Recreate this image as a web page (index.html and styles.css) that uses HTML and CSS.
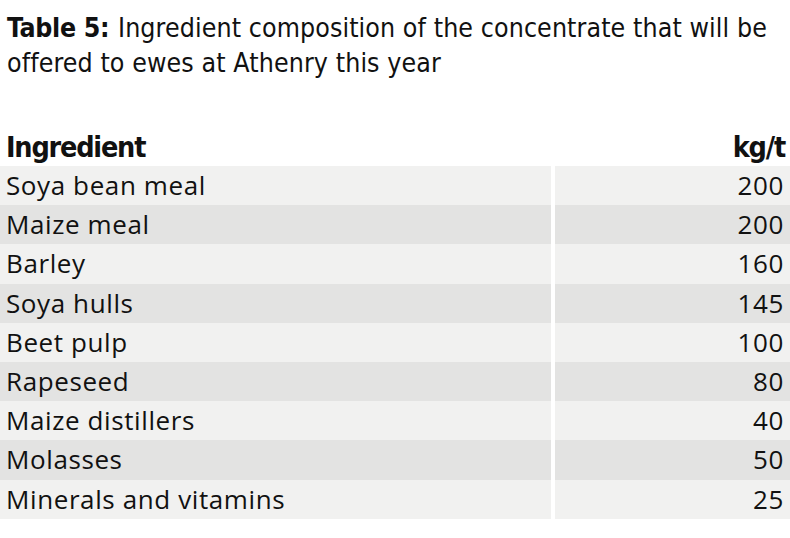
FILE: index.html
```html
<!DOCTYPE html>
<html>
<head>
<meta charset="utf-8">
<link rel="stylesheet" href="styles.css">
</head>
<body>
<div class="page">
  <h1 class="title"><span class="label">Table 5:</span> Ingredient composition of the concentrate that will be offered to ewes at Athenry this year</h1>
  <div class="table">
    <div class="head">
      <span>Ingredient</span>
      <span>kg/t</span>
    </div>
    <div class="row"><div class="c1">Soya bean meal</div><div class="c2">200</div></div>
    <div class="row"><div class="c1">Maize meal</div><div class="c2">200</div></div>
    <div class="row"><div class="c1">Barley</div><div class="c2">160</div></div>
    <div class="row"><div class="c1">Soya hulls</div><div class="c2">145</div></div>
    <div class="row"><div class="c1">Beet pulp</div><div class="c2">100</div></div>
    <div class="row"><div class="c1">Rapeseed</div><div class="c2">80</div></div>
    <div class="row"><div class="c1">Maize distillers</div><div class="c2">40</div></div>
    <div class="row"><div class="c1">Molasses</div><div class="c2">50</div></div>
    <div class="row"><div class="c1">Minerals and vitamins</div><div class="c2">25</div></div>
  </div>
</div>
</body>
</html>
```
FILE: styles.css
```css
html, body {
  margin: 0;
  padding: 0;
  background: #ffffff;
}
.page {
  width: 790px;
  height: 538px;
  overflow: hidden;
  color: #111111;
}
.title {
  margin: 0;
  padding: 10px 4px 0 7px;
  font-family: "DejaVu Sans Condensed", "DejaVu Sans", sans-serif;
  font-stretch: condensed;
  font-weight: normal;
  font-size: 26.5px;
  letter-spacing: 0.1px;
  line-height: 35px;
}
.title .label {
  font-weight: bold;
  letter-spacing: -0.3px;
  margin-right: 1px;
}
.table {
  margin-top: 45px;
}
.head {
  display: flex;
  justify-content: space-between;
  align-items: flex-end;
  height: 41px;
  padding: 0 5px 0 6px;
  font-family: "DejaVu Sans Condensed", "DejaVu Sans", sans-serif;
  font-stretch: condensed;
  font-weight: bold;
  font-size: 28.5px;
  letter-spacing: -1.2px;
  line-height: 36px;
}
.row {
  display: grid;
  grid-template-columns: 551px 1fr;
  column-gap: 4px;
  height: 39.2px;
  font-family: "Open Sans", sans-serif;
  font-size: 26px;
  letter-spacing: 0.6px;
  line-height: 39px;
}
.row:nth-child(even) > div {
  background: #f1f1f0;
}
.row:nth-child(odd) > div {
  background: #e3e3e2;
}
.c1 {
  padding-left: 6px;
}
.c2 {
  text-align: right;
  padding-right: 6px;
}
```
